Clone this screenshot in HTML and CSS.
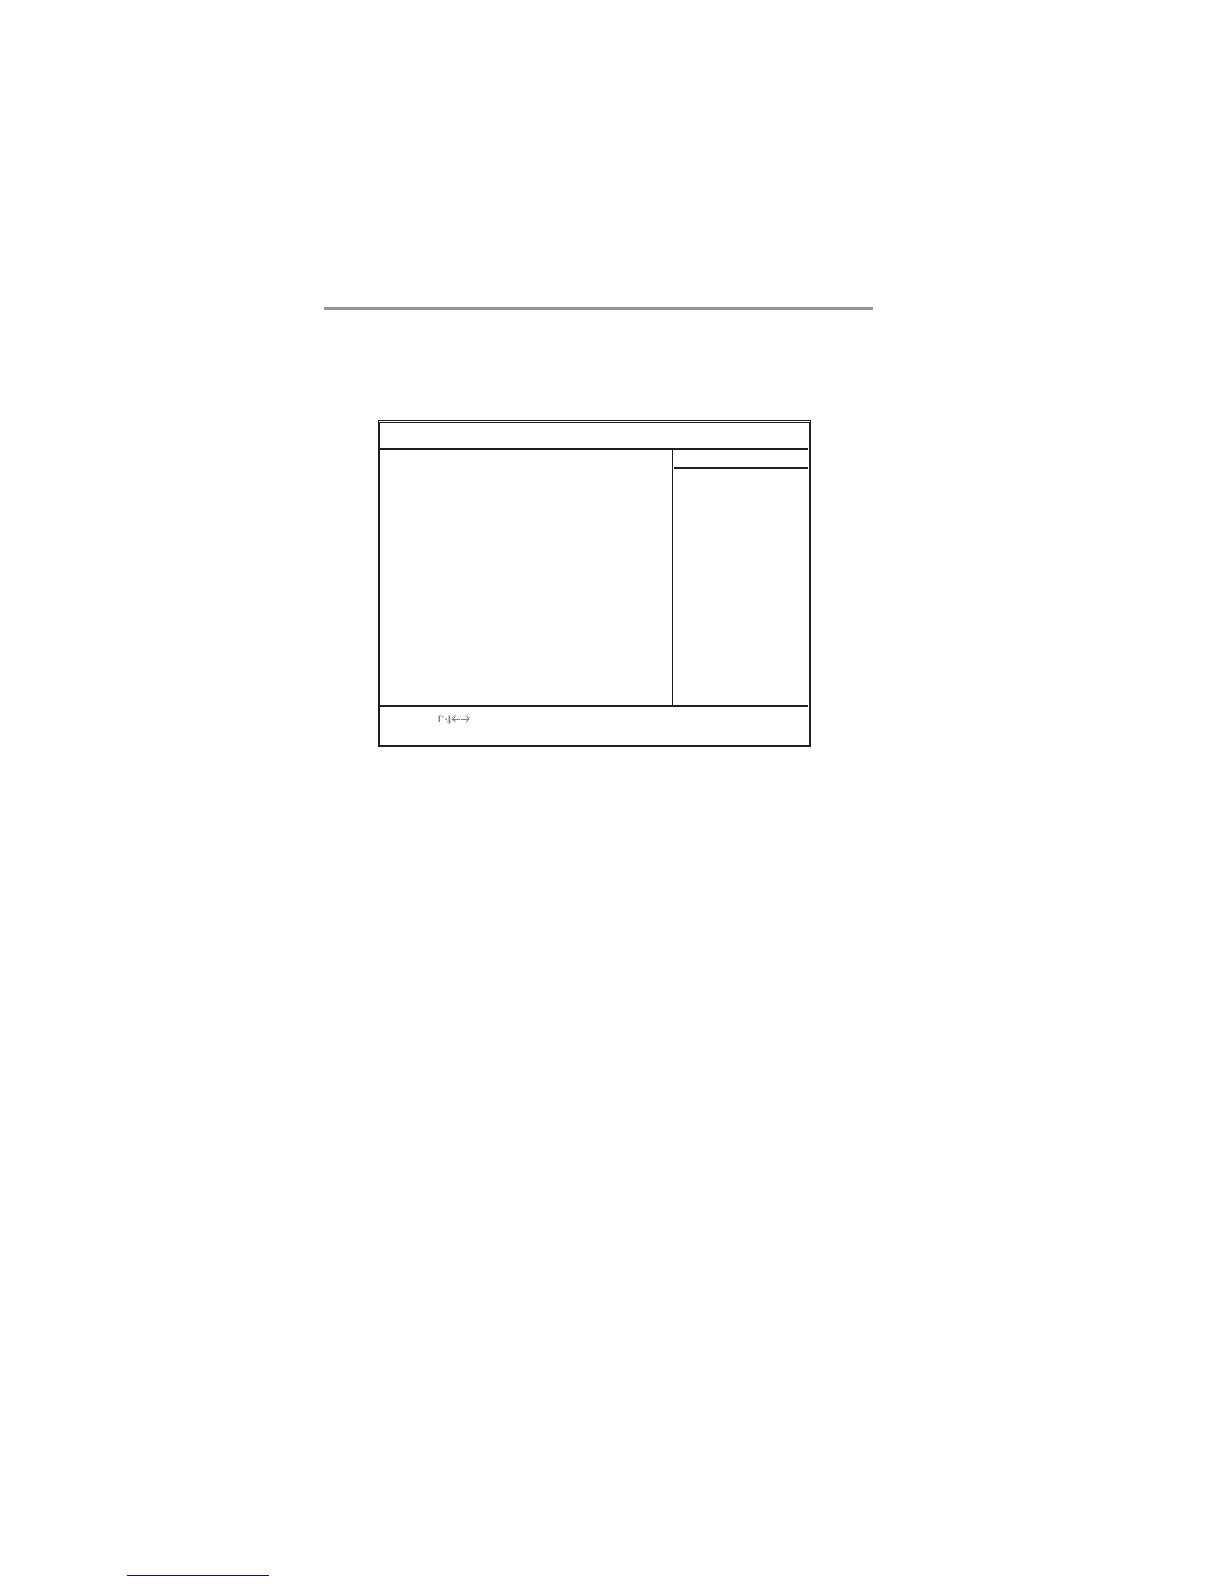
FILE: index.html
```
<!DOCTYPE html>
<html lang="en">
<head>
  <meta charset="UTF-8">
  <meta name="viewport" content="width=device-width, initial-scale=1.0">
  <title>Setup Screen</title>
  <link rel="stylesheet" href="styles.css">
</head>
<body>

  <main class="content">
    <hr class="page-rule">

    <!-- Setup screen frame -->
    <div class="screen">
      <div class="screen-header"></div>
      <div class="screen-body">
        <div class="screen-items"></div>
        <div class="screen-help">
          <div class="help-title"></div>
        </div>
      </div>

      <!-- Arrow keys -->
      <div class="screen-keys">
        <svg class="arrows" width="34" height="12" viewBox="0 0 34 12" role="img" aria-label="Up, down, left and right arrows">
          <path class="soft" d="M2 2V9M3 2L6 4V5M8 6H10M12 2V10M10 8L12 10L14 8"/>
          <path d="M2.500 3V9M12.500 3V10M9 6.500H10"/>
          <path class="soft" d="M19 2L15 6L19 9M28 2L32 5L29 10"/>
          <path d="M15 6.500H23M24 6.500H32M18 4L16 6L18 8M30 4L32 6L30 8"/>
        </svg>
      </div>
    </div>
  </main>

  <footer class="page-footer">
    <hr class="footer-rule">
  </footer>

</body>
</html>
```

FILE: styles.css
```
* {
  box-sizing: border-box;
}
body {
  display: flex;
  flex-direction: column;
  min-height: 100vh;
  margin: 0;
  background-color: #fff;
  font-family: "Liberation Sans", Arial, sans-serif;
}
.content {
  width: 100%;
  max-width: 873px;
  padding-top: 307px;
  padding-left: 324px;
}
.page-rule {
  height: 3px;
  margin: 0;
  border: none;
  background-color: #949494;
}
.screen {
  margin: 110px 62px 0 54px;
  padding-right: 1px;
  border: 2px solid #1f1e20;
  border-top: 3px double #1f1e20;
}
.screen-header {
  height: 27px;
  border-bottom: 2px solid #1f1e20;
}
.screen-body {
  display: flex;
  min-height: 255px;
}
.screen-items {
  flex: 1;
}
.screen-help {
  width: 136px;
  padding-left: 1px;
  border-left: 1px solid #1f1e20;
}
.help-title {
  height: 19px;
  border-bottom: 2px solid #1f1e20;
}
.screen-keys {
  height: 40px;
  padding: 6px 0 0 57px;
  border-top: 2px solid #1f1e20;
}
.arrows {
  display: block;
  fill: none;
  stroke: #808080;
  stroke-width: 1;
}
.arrows .soft {
  stroke: #ccc;
  stroke-width: 2;
}
.page-footer {
  margin-top: auto;
  padding: 0 0 8px 127px;
}
.footer-rule {
  width: 142px;
  height: 1px;
  margin: 0;
  border: none;
  background-color: #0c0c96;
}
```
